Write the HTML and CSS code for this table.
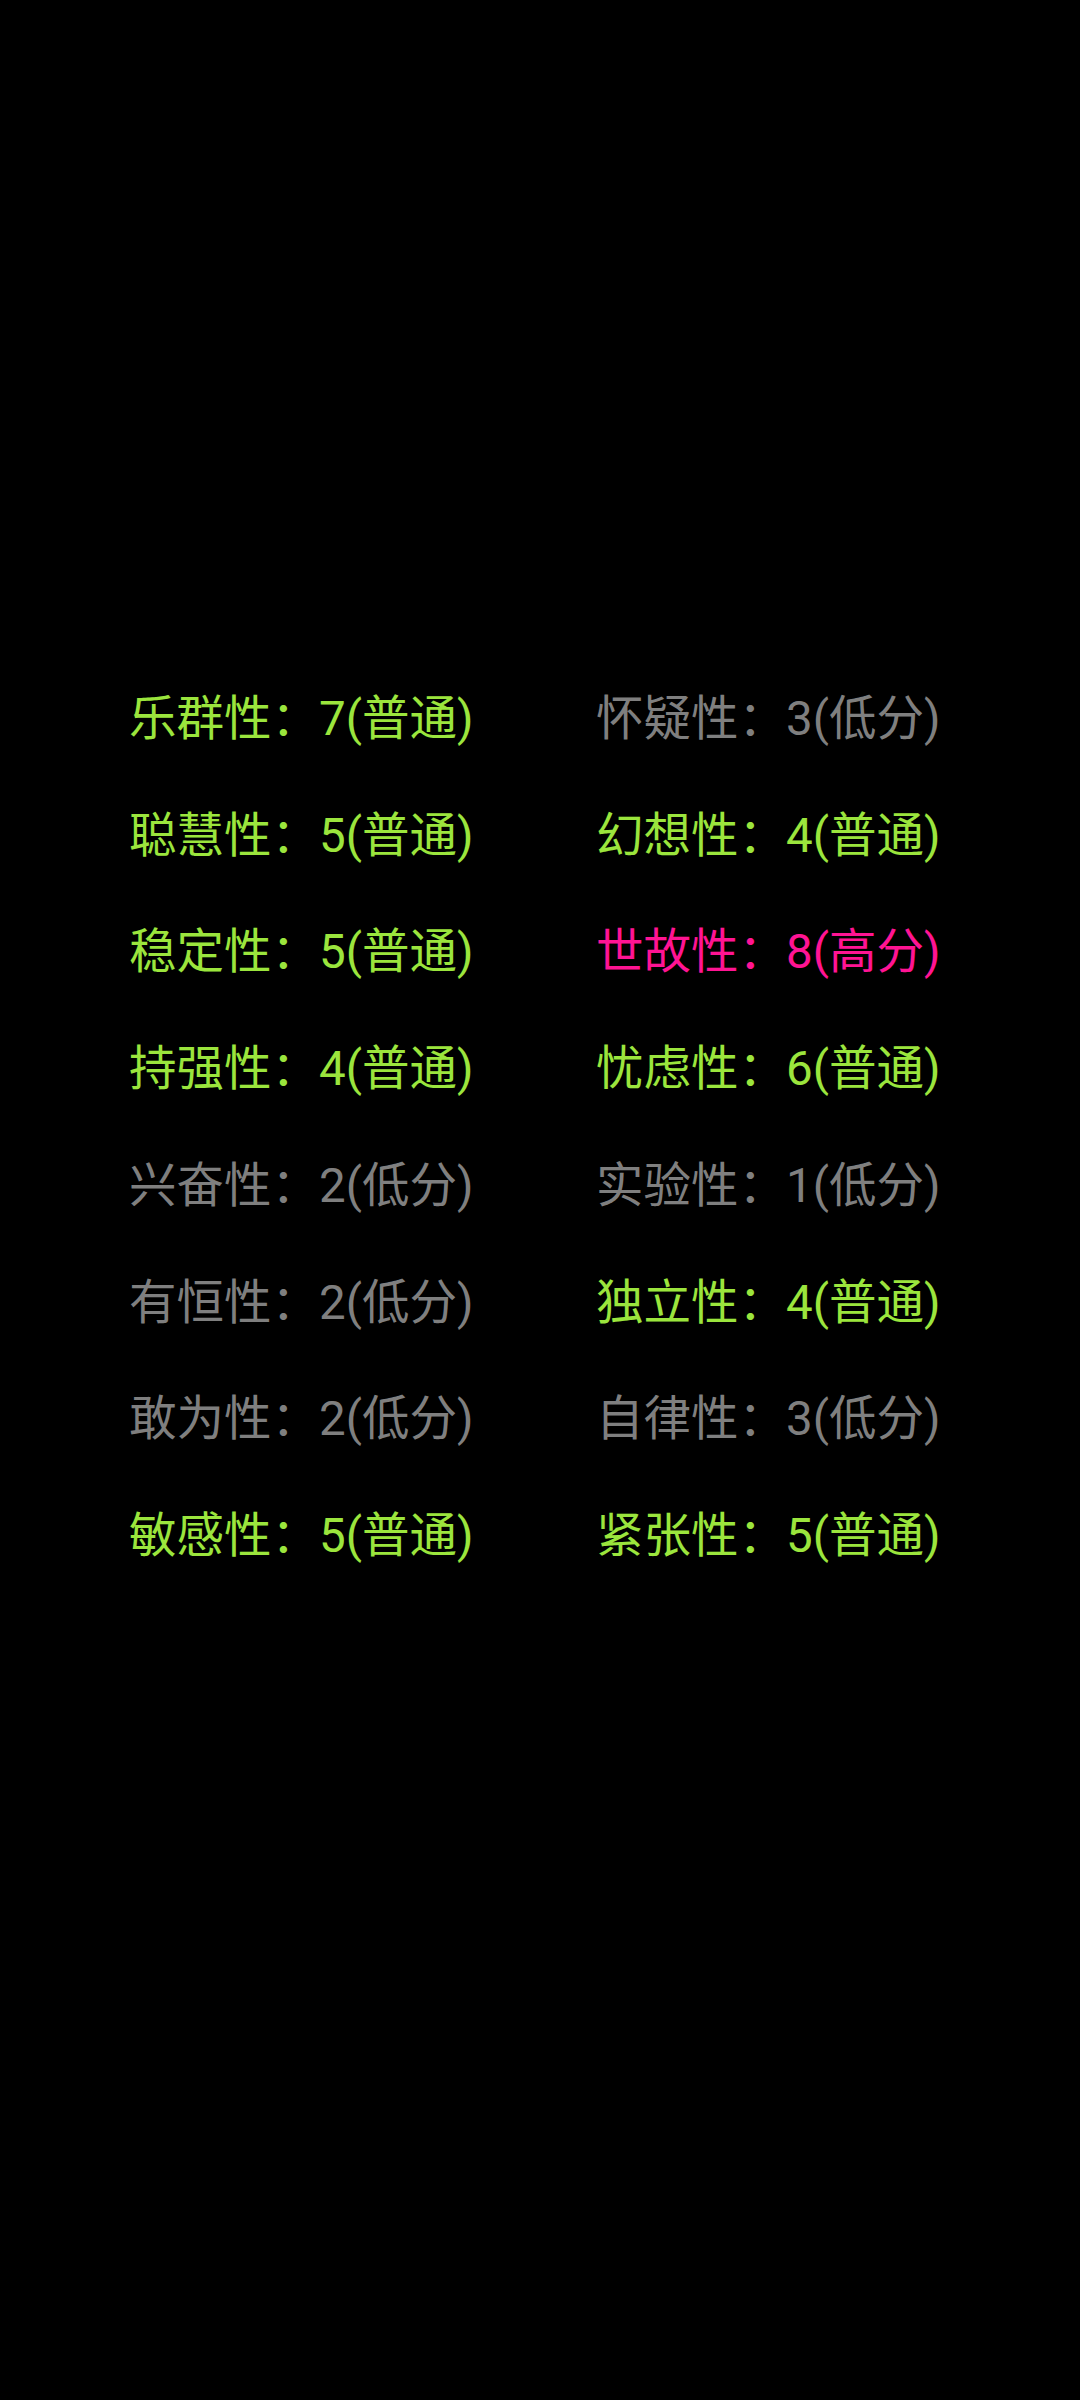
FILE: index.html
```html
<!DOCTYPE html>
<html lang="zh-CN">
<head>
  <meta charset="UTF-8" />
  <title>性格测试结果</title>
  <meta name="viewport" content="width=device-width, initial-scale=1.0" />
  <link rel="stylesheet" href="styles.css">
</head>
<body>
  <div class="result">
    <div class="item mid">乐群性：7(普通)</div>
    <div class="item low">怀疑性：3(低分)</div>

    <div class="item mid">聪慧性：5(普通)</div>
    <div class="item mid">幻想性：4(普通)</div>

    <div class="item mid">稳定性：5(普通)</div>
    <div class="item high">世故性：8(高分)</div>

    <div class="item mid">持强性：4(普通)</div>
    <div class="item mid">忧虑性：6(普通)</div>

    <div class="item low">兴奋性：2(低分)</div>
    <div class="item low">实验性：1(低分)</div>

    <div class="item low">有恒性：2(低分)</div>
    <div class="item mid">独立性：4(普通)</div>

    <div class="item low">敢为性：2(低分)</div>
    <div class="item low">自律性：3(低分)</div>

    <div class="item mid">敏感性：5(普通)</div>
    <div class="item mid">紧张性：5(普通)</div>
  </div>
</body>
</html>
```

FILE: styles.css
```css
body {
  margin: 0;
  background-color: #000;
  font-family: Roboto, "Noto Sans CJK SC", sans-serif;
  height: 2400px;
}

.result {
  display: grid;
  grid-template-columns: 467px 1fr;
  padding: 661px 0 0 129px;
}

.item {
  font-size: 47.5px;
  line-height: 116.7px;
  white-space: nowrap;
}

.mid {
  color: #9be53d;
}

.low {
  color: #7f7f7f;
}

.high {
  color: #ff1493;
}
```
